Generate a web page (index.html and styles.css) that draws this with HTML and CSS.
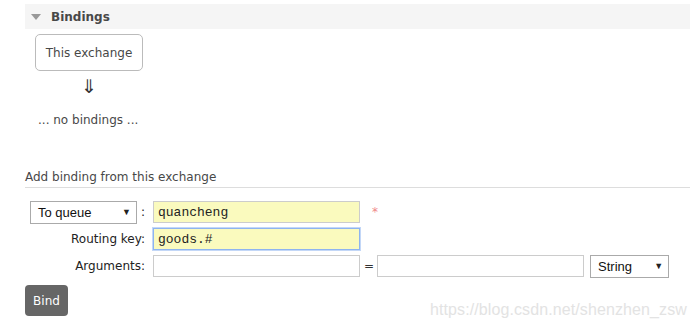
FILE: index.html
```html
<!DOCTYPE html>
<html lang="en">
<head>
    <meta charset="UTF-8">
    <title>Bindings</title>
    <link rel="stylesheet" href="styles.css">
</head>
<body>
    <div class="page">
        <div class="section-head">
            <span class="toggle"></span>
            <h2>Bindings</h2>
        </div>
        <div class="graph">
            <div class="exchange-box">This exchange</div>
            <div class="arrow">&#8659;</div>
            <p class="empty">... no bindings ...</p>
        </div>

        <h3 class="subhead">Add binding from this exchange</h3>
        <div class="bind-form">
            <div class="label-cell">
                <div class="fake-select wide"><span>To queue</span><span class="caret">&#9660;</span></div>
                <span class="colon">:</span>
            </div>
            <div class="field-cell">
                <input type="text" class="field filled" value="quancheng">
                <span class="required">*</span>
            </div>

            <label class="label-cell">Routing key:</label>
            <div class="field-cell">
                <input type="text" class="field filled focus" value="goods.#">
            </div>

            <label class="label-cell">Arguments:</label>
            <div class="field-cell">
                <input type="text" class="field">
                <span class="eq">=</span>
                <input type="text" class="field">
                <div class="fake-select narrow"><span>String</span><span class="caret">&#9660;</span></div>
            </div>
        </div>
        <button class="bind-btn">Bind</button>
    </div>
    <div class="watermark">https://blog.csdn.net/shenzhen_zsw</div>
</body>
</html>
```

FILE: styles.css
```css
body { margin: 0; font-family: "DejaVu Sans", Verdana, sans-serif; font-size: 12px; color: #484848; background: #fff; position: relative; height: 330px; overflow: hidden; }
.page { padding: 4px 0 0 25px; }

.section-head { display: flex; align-items: center; height: 25px; background: #f5f5f5; padding-left: 6px; }
.toggle { width: 0; height: 0; border-left: 5px solid transparent; border-right: 5px solid transparent; border-top: 6px solid #999; margin-right: 10px; margin-top: 1px; }
.section-head h2 { margin: 0; font-size: 12px; font-weight: bold; color: #484848; }

.graph { padding-left: 10px; }
.exchange-box { width: 106px; height: 35px; margin-top: 5px; border: 1px solid #bbb; border-radius: 5px; display: flex; align-items: center; justify-content: center; }
.arrow { width: 108px; text-align: center; font-size: 19px; line-height: 20px; margin-top: 5px; color: #333; }
.empty { margin: 17px 0 0 3px; }

.subhead { margin: 43px 0 0; padding-bottom: 3px; font-size: 12px; font-weight: normal; color: #484848; border-bottom: 1px solid #ddd; }

.bind-form { display: grid; grid-template-columns: 123px 1fr; row-gap: 5px; margin: 13px 0 0 5px; align-items: center; }
.label-cell { display: flex; align-items: center; justify-content: flex-end; padding-right: 8px; color: #222; height: 22px; }
.label-cell .colon { margin-left: 4px; }
.field-cell { display: flex; align-items: center; height: 22px; }
.field { width: 207px; height: 22px; box-sizing: border-box; border: 1px solid #ccc; padding: 0 4px; font-family: "Liberation Mono", monospace; font-size: 13px; color: #222; background: #fff; margin: 0; outline: none; }
.field.filled { background: #fafabe; }
.field.focus { border-color: #8eb4f0; box-shadow: 0 0 0 1px #c3d7f7; }
.required { color: #f08888; margin-left: 12px; font-size: 12px; }
.eq { margin: 0 3px 0 4px; color: #333; }

.fake-select { display: flex; align-items: center; justify-content: space-between; box-sizing: border-box; height: 23px; border: 1px solid #aaa; padding: 0 5px 0 7px; font-family: "Liberation Sans", Arial, sans-serif; font-size: 13px; color: #111; background: #fff; }
.fake-select.wide { width: 110px; margin-left: 0; }
.fake-select.narrow { width: 79px; margin-left: 6px; }
.fake-select .caret { font-size: 9px; color: #222; }

.bind-btn { margin-top: 8px; width: 43px; height: 31px; border: 0; border-radius: 4px; background: #666; color: #fff; font-family: "DejaVu Sans", Verdana, sans-serif; font-size: 12px; padding: 0; }

.watermark { position: absolute; left: 430px; top: 301px; font-family: "Liberation Sans", Arial, sans-serif; font-size: 16px; color: #e3e3e3; letter-spacing: 0.1px; }
```
